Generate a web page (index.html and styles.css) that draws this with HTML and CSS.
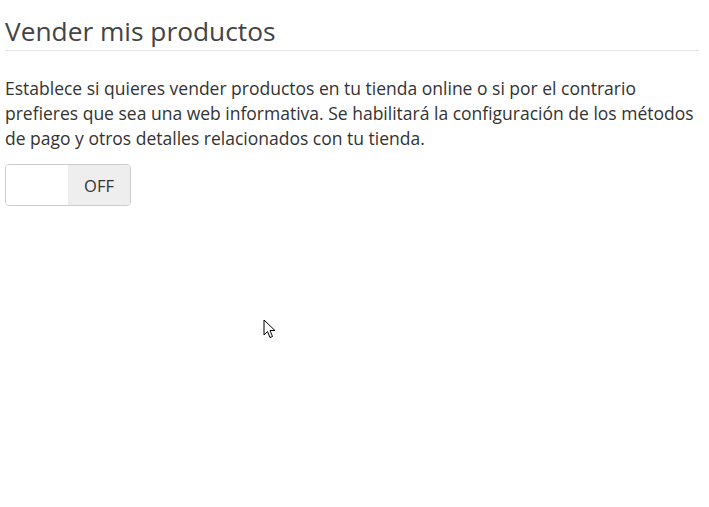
FILE: index.html
```html
<!DOCTYPE html>
<html lang="es">
<head>
<meta charset="utf-8">
<link rel="stylesheet" href="styles.css">
</head>
<body>
<section class="panel">
  <h2 class="title">Vender mis productos</h2>
  <p class="desc">Establece si quieres vender productos en tu tienda online o si por el contrario prefieres que sea una web informativa. Se habilitará la configuración de los métodos de pago y otros detalles relacionados con tu tienda.</p>
  <div class="switch">
    <span class="switch-handle"></span>
    <span class="switch-label">OFF</span>
  </div>
</section>
<svg class="cursor" width="14" height="21" viewBox="0 0 14 21">
  <path d="M1 1 L1 16 L4.5 12.5 L7 18.5 L9.5 17.5 L7 11.5 L12 11.5 Z" fill="#fff" stroke="#000" stroke-width="1" stroke-linejoin="miter"/>
</svg>
</body>
</html>
```
FILE: styles.css
```css
html, body {
  margin: 0;
  padding: 0;
  background: #fff;
}
body {
  font-family: "Open Sans", "Noto Sans", sans-serif;
  color: #333;
  position: relative;
  min-height: 507px;
}
.panel {
  padding: 0 10px 0 5px;
}
.title {
  margin: 0;
  padding: 15px 0 3px;
  font-size: 26.3px;
  font-weight: 400;
  line-height: 32px;
  color: #444;
  border-bottom: 1px solid #e5e5e5;
}
.desc {
  margin: 25px 0 13px;
  font-size: 17.5px;
  line-height: 25px;
  color: #333;
}
.switch {
  display: flex;
  width: 124px;
  height: 40px;
  border: 1px solid #ccc;
  border-radius: 4px;
  overflow: hidden;
}
.switch-handle {
  width: 62px;
  background: #fff;
}
.switch-label {
  flex: 1;
  background: #eee;
  display: flex;
  align-items: center;
  justify-content: center;
  font-size: 16.5px;
  color: #333;
}
.cursor {
  position: absolute;
  left: 263px;
  top: 319px;
}
```
